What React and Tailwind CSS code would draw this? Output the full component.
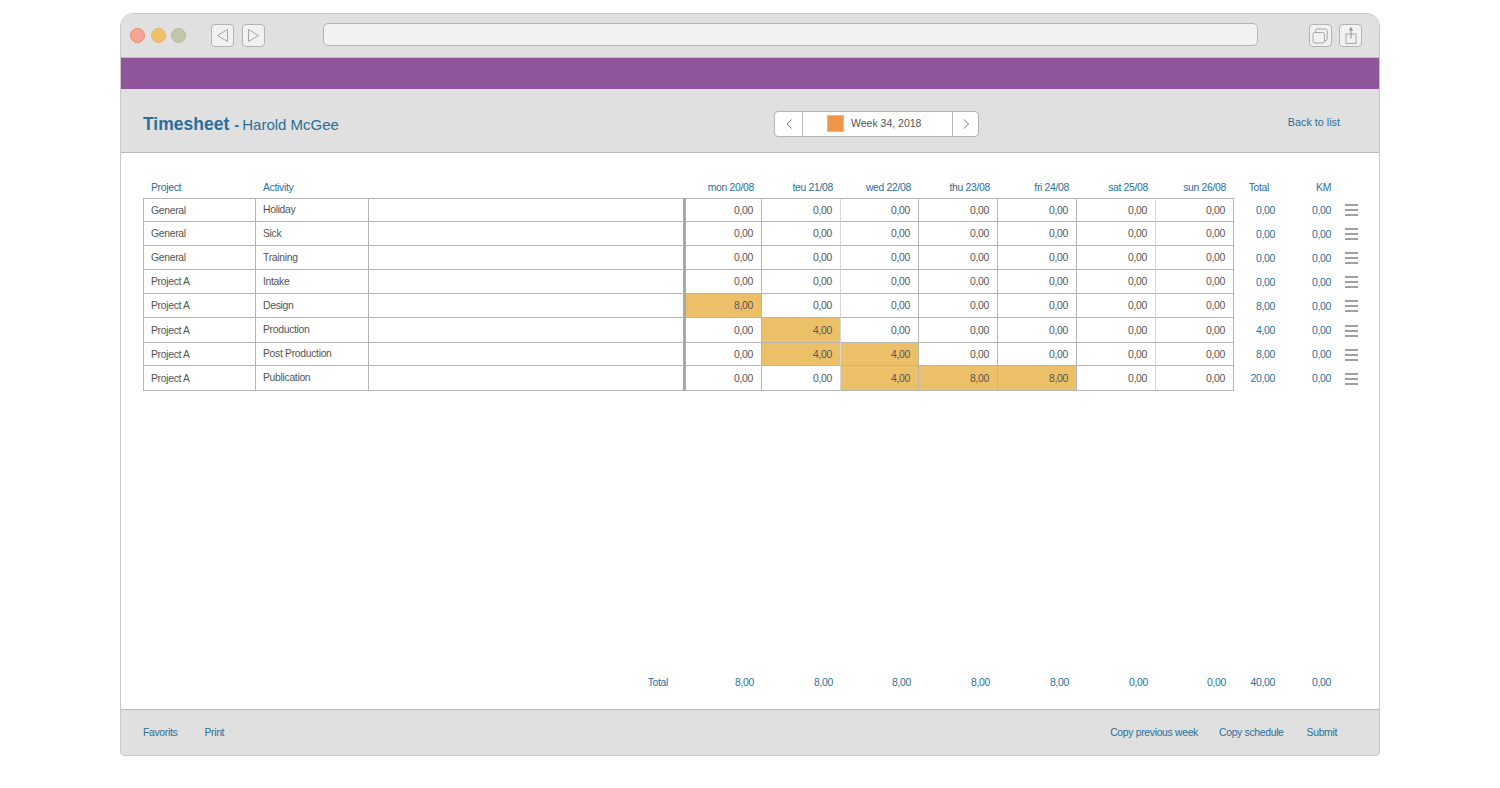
import React from 'react';

const rowGrid =
  'grid grid-cols-[113px_113px_314px_3px_76px_79px_78px_79px_79px_79px_78px_42px_56px_50px]';

const days = ['mon 20/08', 'teu 21/08', 'wed 22/08', 'thu 23/08', 'fri 24/08', 'sat 25/08', 'sun 26/08'];

const rows = [
  { project: 'General', activity: 'Holiday', height: 'h-[24px]', hours: ['0,00', '0,00', '0,00', '0,00', '0,00', '0,00', '0,00'], total: '0,00' },
  { project: 'General', activity: 'Sick', height: 'h-[24px]', hours: ['0,00', '0,00', '0,00', '0,00', '0,00', '0,00', '0,00'], total: '0,00' },
  { project: 'General', activity: 'Training', height: 'h-[24px]', hours: ['0,00', '0,00', '0,00', '0,00', '0,00', '0,00', '0,00'], total: '0,00' },
  { project: 'Project A', activity: 'Intake', height: 'h-[24px]', hours: ['0,00', '0,00', '0,00', '0,00', '0,00', '0,00', '0,00'], total: '0,00' },
  { project: 'Project A', activity: 'Design', height: 'h-[24px]', hours: ['8,00', '0,00', '0,00', '0,00', '0,00', '0,00', '0,00'], total: '8,00' },
  { project: 'Project A', activity: 'Production', height: 'h-[25px]', hours: ['0,00', '4,00', '0,00', '0,00', '0,00', '0,00', '0,00'], total: '4,00' },
  { project: 'Project A', activity: 'Post Production', height: 'h-[23px]', hours: ['0,00', '4,00', '4,00', '0,00', '0,00', '0,00', '0,00'], total: '8,00' },
  { project: 'Project A', activity: 'Publication', height: 'h-[25px]', hours: ['0,00', '0,00', '4,00', '8,00', '8,00', '0,00', '0,00'], total: '20,00' },
];

const dayTotals = ['8,00', '8,00', '8,00', '8,00', '8,00', '0,00', '0,00'];

const ToolbarButton = ({ children }) => (
  <div className="flex h-[23px] w-[23px] items-center justify-center rounded-[4px] border border-[#b4b4b4] bg-[#f1f1f1]">
    <svg width="17" height="17" viewBox="0 0 17 17" fill="none" stroke="#a6a6a6" strokeWidth="1" className="overflow-visible">
      {children}
    </svg>
  </div>
);

const MenuIcon = () => (
  <div className="flex w-[13px] flex-col gap-[3px]">
    <div className="h-[2px] bg-[#a0a0a0]" />
    <div className="h-[2px] bg-[#a0a0a0]" />
    <div className="h-[2px] bg-[#a0a0a0]" />
  </div>
);

export default function App() {
  return (
    <div className="flex h-[788px] justify-center bg-white pt-[13px] font-['Liberation_Sans',Arial,sans-serif] text-[10.4px] tracking-[-0.32px] text-[#555555]">
      <div className="flex h-[743px] w-[1260px] flex-col overflow-hidden rounded-t-[13px] rounded-b-[4px] border border-[#c8c8c8] bg-white">
        {/* Browser chrome */}
        <div className="flex h-[44px] shrink-0 items-center border-b border-[#b9b9b9] bg-[#e0e0e0] pb-[1px] pl-[9px] pr-[17px]">
          <div className="flex gap-[5.5px]">
            <div className="h-[15px] w-[15px] rounded-full border border-[#e58a70] bg-[#f6a595]" />
            <div className="h-[15px] w-[15px] rounded-full border border-[#e6b45c] bg-[#efc269]" />
            <div className="h-[15px] w-[15px] rounded-full border border-[#b6bb9c] bg-[#c0c6a8]" />
          </div>
          <div className="ml-[25px] flex gap-[8px]">
            <ToolbarButton>
              <path d="M13.5 2.5 L3.5 8.5 L13.5 14.5 Z" />
            </ToolbarButton>
            <ToolbarButton>
              <path d="M3.5 2.5 L13.5 8.5 L3.5 14.5 Z" />
            </ToolbarButton>
          </div>
          <div className="mb-[2px] ml-[58px] h-[23px] flex-1 rounded-[5px] border border-[#b4b4b4] bg-[#f2f2f2]" />
          <div className="ml-[51px] flex gap-[7px]">
            <ToolbarButton>
              <path d="M3.5 5 V3.7 Q3.5 2 5.2 2 H13.5 Q15.2 2 15.2 3.7 V12 Q15.2 13.5 12.5 14" />
              <rect x="1" y="5.5" width="11.5" height="10.5" rx="2" />
            </ToolbarButton>
            <ToolbarButton>
              <rect x="4" y="7" width="10" height="9.5" />
              <path d="M9 11.5 V2" stroke="#8f8f8f" />
              <path d="M6.8 3.5 L9 0 L11.2 3.5 Z" fill="#8f8f8f" stroke="none" />
            </ToolbarButton>
          </div>
        </div>

        {/* Purple bar */}
        <div className="h-[31px] shrink-0 bg-[#8f5499]" />

        {/* Page header */}
        <div className="grid h-[64px] shrink-0 grid-cols-[631px_205px_1fr] items-center border-b border-[#b9b9b9] bg-[#e0e0e0] pl-[22px] pr-[39px] tracking-normal">
          <div className="mt-[8px] flex items-baseline text-[#2a6f9b]">
            <span className="text-[17.5px] font-bold">Timesheet</span>
            <span className="ml-[5px] text-[15px] font-bold">-</span>
            <span className="ml-[3px] text-[15px]">Harold McGee</span>
          </div>
          <div className="mt-[6px] flex h-[26px] items-center rounded-[4px] border border-[#b4b4b4] bg-white text-[10.5px]">
            <div className="flex h-full w-[28px] items-center justify-center border-r border-[#b4b4b4]">
              <svg width="10" height="12" viewBox="0 0 10 12" fill="none" stroke="#777777" strokeWidth="1">
                <path d="M7.5 1.5 L3 6 L7.5 10.5" />
              </svg>
            </div>
            <div className="flex flex-1 items-center pl-[24px]">
              <div className="h-[17px] w-[17px] border border-[#eeb685] bg-[#f0964c]" />
              <span className="ml-[7px] text-[#555555]">Week 34, 2018</span>
            </div>
            <div className="flex h-full w-[26px] items-center justify-center border-l border-[#b4b4b4]">
              <svg width="10" height="12" viewBox="0 0 10 12" fill="none" stroke="#777777" strokeWidth="1">
                <path d="M3 1.5 L7.5 6 L3 10.5" />
              </svg>
            </div>
          </div>
          <div className="mt-[4px] text-right text-[10.8px] text-[#2a6f9b]">Back to list</div>
        </div>

        {/* Timesheet */}
        <div className="flex flex-1 flex-col pl-[22px]">
          <div className={rowGrid + ' mb-[2px] mt-[27px] h-[16px] items-center text-[#2a6f9b]'}>
            <div className="pl-[8px]">Project</div>
            <div className="pl-[7px]">Activity</div>
            <div />
            <div />
            {days.map((day) => (
              <div key={day} className="pr-[8px] text-right">
                {day}
              </div>
            ))}
            <div className="pr-[7px] text-right">Total</div>
            <div className="pr-[1px] text-right">KM</div>
            <div />
          </div>

          {rows.map((row, i) => (
            <div key={i} className={rowGrid + ' ' + row.height}>
              <div className={'flex items-center border-b border-l border-r border-[#b5b5b5] pl-[7px] pt-[1px] ' + (i === 0 ? 'border-t' : '')}>
                {row.project}
              </div>
              <div className={'flex items-center border-b border-r border-[#b5b5b5] pl-[7px] ' + (i === 0 ? 'border-t' : '')}>
                {row.activity}
              </div>
              <div className={'border-b border-[#b5b5b5] ' + (i === 0 ? 'border-t' : '')} />
              <div className="bg-[#a8a8a8]" />
              {row.hours.map((value, d) => (
                <div
                  key={d}
                  className={
                    'flex items-center justify-end border-b border-r border-[#b5b5b5] pr-[8px] pt-[1px] ' +
                    (i === 0 ? 'border-t ' : '') +
                    (d === 1 || d === 5 ? 'border-r-[#d6d6d6] ' : '') +
                    (value === '0,00' ? 'bg-white' : 'bg-[#ecc069]')
                  }
                >
                  {value}
                </div>
              ))}
              <div className="flex items-center justify-end pr-[1px] pt-[1px] text-[#2a6f9b]">{row.total}</div>
              <div className="flex items-center justify-end pr-[1px] pt-[1px] text-[#2a6f9b]">0,00</div>
              <div className="flex items-center pl-[13px]">
                <MenuIcon />
              </div>
            </div>
          ))}

          <div className={rowGrid + ' mb-[20px] mt-auto h-[14px] items-center text-[#2a6f9b]'}>
            <div />
            <div />
            <div className="pr-[15px] text-right">Total</div>
            <div />
            {dayTotals.map((value, d) => (
              <div key={d} className="pr-[8px] text-right">
                {value}
              </div>
            ))}
            <div className="pr-[1px] text-right">40,00</div>
            <div className="pr-[1px] text-right">0,00</div>
            <div />
          </div>
        </div>

        {/* Footer */}
        <div className="flex h-[46px] shrink-0 items-center justify-between border-t border-[#b9b9b9] bg-[#e0e0e0] pl-[22px] pr-[42px] text-[#2a6f9b]">
          <div className="flex gap-[27px]">
            <span>Favorits</span>
            <span>Print</span>
          </div>
          <div className="flex">
            <span>Copy previous week</span>
            <span className="ml-[21px]">Copy schedule</span>
            <span className="ml-[23px]">Submit</span>
          </div>
        </div>
      </div>
    </div>
  );
}
